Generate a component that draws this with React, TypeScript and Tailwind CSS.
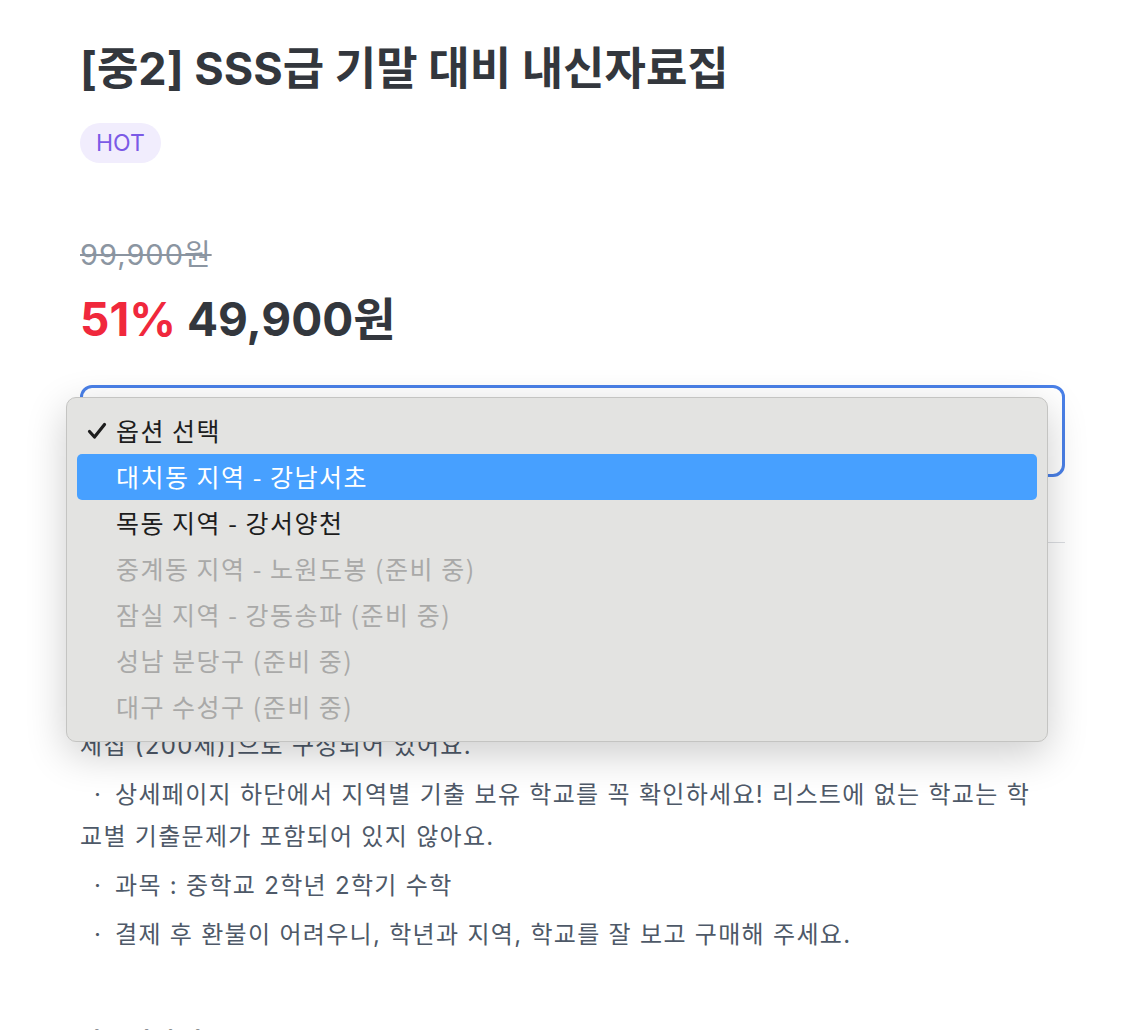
import React from "react";

const fontStack = "font-['Inter','Noto_Sans_CJK_KR',sans-serif]";

const options = [
  { label: "옵션 선택", checked: true },
  { label: "대치동 지역 - 강남서초", active: true },
  { label: "목동 지역 - 강서양천" },
  { label: "중계동 지역 - 노원도봉 (준비 중)", disabled: true },
  { label: "잠실 지역 - 강동송파 (준비 중)", disabled: true },
  { label: "성남 분당구 (준비 중)", disabled: true },
  { label: "대구 수성구 (준비 중)", disabled: true },
];

// 두 줄짜리 항목은 원본과 같은 자리에서 끊기도록 br 로 나눔
const notes: string[][] = [
  ["학년 : 중학교 2학년 2학기 기말고사 대비"],
  ["발송 : 결제 후 마이페이지에서 바로 다운로드 가능해요."],
  ["구성 : 학교별 기출문제 + 예상문제 [SSS급 예상문제 + 학교별 기출문", "제집 (200제)]으로 구성되어 있어요."],
  ["상세페이지 하단에서 지역별 기출 보유 학교를 꼭 확인하세요! 리스트에 없는 학교는 학", "교별 기출문제가 포함되어 있지 않아요."],
  ["과목 : 중학교 2학년 2학기 수학"],
  ["결제 후 환불이 어려우니, 학년과 지역, 학교를 잘 보고 구매해 주세요."],
];

function Check() {
  return (
    <svg width="20" height="18" viewBox="0 0 20 18" fill="none">
      <path d="M2.5 9.5 L7.5 15 L17.5 2.5" stroke="#1d1d1d" strokeWidth="3.2" strokeLinecap="round" strokeLinejoin="round" />
    </svg>
  );
}

function OptionMenu() {
  return (
    <div className="absolute left-[-14px] top-[12px] z-10 w-[982px] rounded-[10px] border border-[#c4c4c2] bg-[#e3e3e1] px-[10px] pt-[10px] pb-[11px] shadow-[0_12px_40px_rgba(0,0,0,0.2)] font-['Noto_Sans_CJK_KR',sans-serif]">
      {options.map((o) => (
        <div
          key={o.label}
          className={
            "flex h-[46px] items-center rounded-[5px] text-[25px] tracking-[1.5px] " +
            (o.active ? "bg-[#47a0ff] text-white" : o.disabled ? "text-[#a9a9a8]" : "text-[#1d1d1d]")
          }
        >
          <span className="flex w-[39px] pl-[10px]">{o.checked && <Check />}</span>
          <span>{o.label}</span>
        </div>
      ))}
    </div>
  );
}

export default function App() {
  return (
    <div className={`h-[1030px] overflow-hidden bg-white pl-[80px] pr-[59px] pt-[40px] ${fontStack}`}>
      <h1 className="text-[45px] font-bold leading-[58px] text-[#33373d]">
        [중2] SSS급 기말 대비 내신자료집
      </h1>
      <div className="mt-[25px] flex">
        <span className="rounded-full bg-[#f1edfd] px-[16px] text-[23px] leading-[40px] text-[#7b5ae6]">HOT</span>
      </div>

      <div className="mt-[76px] text-[29px] leading-[32px] tracking-[1px] text-[#8b95a1] line-through">99,900원</div>
      <div className="mt-[22px] flex gap-[11px] text-[46px] font-bold leading-[52px]">
        <span className="text-[#f0283c]">51%</span>
        <span className="text-[#33373d]">49,900원</span>
      </div>

      <div className="relative mt-[40px]">
        <div className="h-[92px] rounded-[12px] border-[3px] border-[#4a80e8]" />
        <OptionMenu />
      </div>

      <div className="mt-[65px] h-px bg-[#dcdee2]" />

      <ul className="mt-[42px] text-[24px] tracking-[1.3px] text-[#4e5968]">
        {notes.map((n) => (
          <li key={n[0]} className="mb-[7px] leading-[42px]">
            <span className="inline-block w-[35px] text-center tracking-normal">·</span>
            {n[0]}
            {n[1] && (
              <>
                <br />
                {n[1]}
              </>
            )}
          </li>
        ))}
      </ul>

      <h2 className="mt-[70px] text-[24px] font-bold leading-[32px] text-[#33373d]">상품 상세 정보</h2>
    </div>
  );
}
